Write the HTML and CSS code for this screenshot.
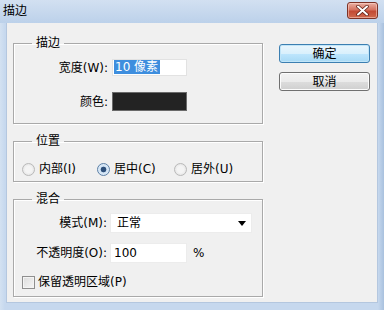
FILE: index.html
```html
<!DOCTYPE html>
<html lang="zh-CN">
<head>
  <meta charset="UTF-8" />
  <title>描边</title>
  <link rel="stylesheet" href="styles.css">
</head>
<body>
  <div class="window">
    <div class="titlebar">
      <span class="title">描边</span>
      <button class="close" aria-label="关闭">
        <svg width="13" height="11" viewBox="0 0 13 11">
          <path d="M2 1.5 L11 9.5 M11 1.5 L2 9.5" stroke="#5a1a10" stroke-width="3.4" stroke-linecap="round"/>
          <path d="M2 1.5 L11 9.5 M11 1.5 L2 9.5" stroke="#fff" stroke-width="2" stroke-linecap="round"/>
        </svg>
      </button>
    </div>

    <div class="client">
      <div class="groups">
        <fieldset class="group stroke">
          <legend>描边</legend>
          <div class="form">
            <label>宽度(W):</label>
            <div class="field width-field"><span class="selected">10 像素</span></div>
            <label>颜色:</label>
            <div class="swatch"></div>
          </div>
        </fieldset>

        <fieldset class="group position">
          <legend>位置</legend>
          <div class="radios">
            <label class="radio"><span class="dot"></span>内部(I)</label>
            <label class="radio"><span class="dot checked"></span>居中(C)</label>
            <label class="radio"><span class="dot"></span>居外(U)</label>
          </div>
        </fieldset>

        <fieldset class="group blend">
          <legend>混合</legend>
          <div class="form">
            <label>模式(M):</label>
            <div class="field select">正常<span class="arrow"></span></div>
            <label>不透明度(O):</label>
            <div class="opacity">
              <div class="field opacity-field">100</div>
              <span class="unit">%</span>
            </div>
          </div>
          <label class="check"><span class="box"></span>保留透明区域(P)</label>
        </fieldset>
      </div>

      <div class="actions">
        <button class="btn default">确定</button>
        <button class="btn">取消</button>
      </div>
    </div>
  </div>
</body>
</html>
```

FILE: styles.css
```css
* {
  box-sizing: border-box;
}

body {
  margin: 0;
  width: 384px;
  height: 310px;
  overflow: hidden;
  font-family: 'DejaVu Sans', 'Noto Sans CJK SC', sans-serif;
  font-size: 12px;
  color: #000;
  background: #c4d6ec;
}

.window {
  height: 310px;
  display: flex;
  flex-direction: column;
  background: linear-gradient(90deg, #d3e1f1 0, #c6d8ee 5px, #c6d8ee 378px, #a9c1de 384px);
  padding: 0 6px 7px 6px;
}

.titlebar {
  height: 23px;
  margin: 0 -6px;
  padding: 0 6px 0 3px;
  display: flex;
  align-items: center;
  justify-content: space-between;
  background: linear-gradient(#d2e0f1, #bcd1ea);
}

.title {
  font-size: 12px;
  line-height: 16px;
  margin-top: -1px;
}

.close {
  width: 31px;
  height: 17px;
  margin-top: -2px;
  padding: 0;
  border: 1px solid #7d3226;
  border-radius: 3px;
  background: linear-gradient(#eab0a3, #d57361 45%, #c24a34 55%, #d06a4e);
  box-shadow: inset 0 0 0 1px rgba(255, 220, 210, 0.5);
  display: flex;
  align-items: center;
  justify-content: center;
}

.client {
  flex: 1;
  display: flex;
  background: #f0f0f0;
  border: 1px solid #b4c7df;
  border-width: 0 1px 1px 1px;
  padding: 12px 0 0 6px;
}

.groups {
  width: 250px;
  display: flex;
  flex-direction: column;
}

.group {
  margin: 0;
  min-width: 0;
  padding: 0;
  border: 1px solid #a9a9a9;
  box-shadow: 1px 1px 0 #fff, inset 1px 1px 0 #fff;
}

.group legend {
  margin-left: 18px;
  padding: 0 4px;
  line-height: 16px;
  font-size: 12px;
}

.position, .blend {
  margin-top: 9px;
}

.form {
  display: grid;
  grid-template-columns: 94px auto;
  column-gap: 4px;
  align-items: center;
  justify-items: start;
}

.form label {
  justify-self: end;
  line-height: 16px;
}

.stroke .form {
  padding: 8px 0 12px;
  row-gap: 16px;
}

.field {
  background: #fff;
  border: 1px solid #e2e2e2;
  line-height: 16px;
  padding: 0 3px;
}

.width-field {
  width: 75px;
  height: 17px;
  padding: 0 1px;
  line-height: 15px;
}

.selected {
  background: #3e8ede;
  color: #fff;
  padding: 0 2px 0 1px;
}

.swatch {
  width: 75px;
  height: 19px;
  background: #232323;
  border: 1px solid #6a6a6a;
}

.radios {
  display: grid;
  grid-template-columns: 75px 77px auto;
  padding: 13px 0 5px 8px;
}

.radio {
  display: flex;
  align-items: center;
  gap: 4px;
  height: 14px;
  line-height: 14px;
}

.dot {
  width: 13px;
  height: 13px;
  border-radius: 50%;
  border: 1px solid #b9b9b9;
  background: radial-gradient(circle, #f4f4f4 40%, #dcdcdc);
}

.dot.checked {
  border-color: #5b7fa6;
  background: radial-gradient(circle, #2d4f7a 0, #2d4f7a 2.5px, #cfe2f4 3.2px, #e9f1f9);
}

.blend .form {
  grid-template-columns: 93px auto;
  column-gap: 3px;
  padding-top: 6px;
  row-gap: 10px;
}

.select {
  width: 142px;
  height: 20px;
  line-height: 18px;
  padding: 0 6px;
  display: flex;
  align-items: center;
  justify-content: space-between;
  border-color: #ececec;
}

.arrow {
  width: 0;
  height: 0;
  border-left: 4px solid transparent;
  border-right: 4px solid transparent;
  border-top: 5px solid #000;
  margin-right: -1px;
}

.opacity {
  display: flex;
  align-items: center;
}

.opacity-field {
  width: 77px;
  height: 20px;
  line-height: 18px;
  border-color: #ececec;
}

.unit {
  margin-left: 6px;
}

.check {
  display: flex;
  align-items: center;
  gap: 3px;
  height: 13px;
  line-height: 13px;
  margin: 13px 0 7px 8px;
}

.box {
  width: 13px;
  height: 13px;
  border: 1px solid #8f8f8f;
  background: linear-gradient(135deg, #dcdcdc, #f6f6f6);
  box-shadow: inset 0 0 0 1px #f4f4f4;
}

.actions {
  display: flex;
  flex-direction: column;
  gap: 9px;
  margin-left: 16px;
  padding-top: 9px;
}

.btn {
  width: 91px;
  height: 19px;
  padding: 0;
  font-family: inherit;
  font-size: 12px;
  line-height: 16px;
  border: 1px solid #707070;
  border-radius: 3px;
  background: linear-gradient(#f2f2f2 0, #ebebeb 50%, #dddddd 51%, #cfcfcf);
  box-shadow: inset 0 0 0 1px #fcfcfc;
  color: #000;
}

.btn.default {
  border-color: #3c7fb1;
  background: linear-gradient(#eaf6fd 0, #d9f0fc 50%, #bee6fd 51%, #a7d9f5);
  box-shadow: inset 0 0 0 1px #c1e5f8;
}
```
